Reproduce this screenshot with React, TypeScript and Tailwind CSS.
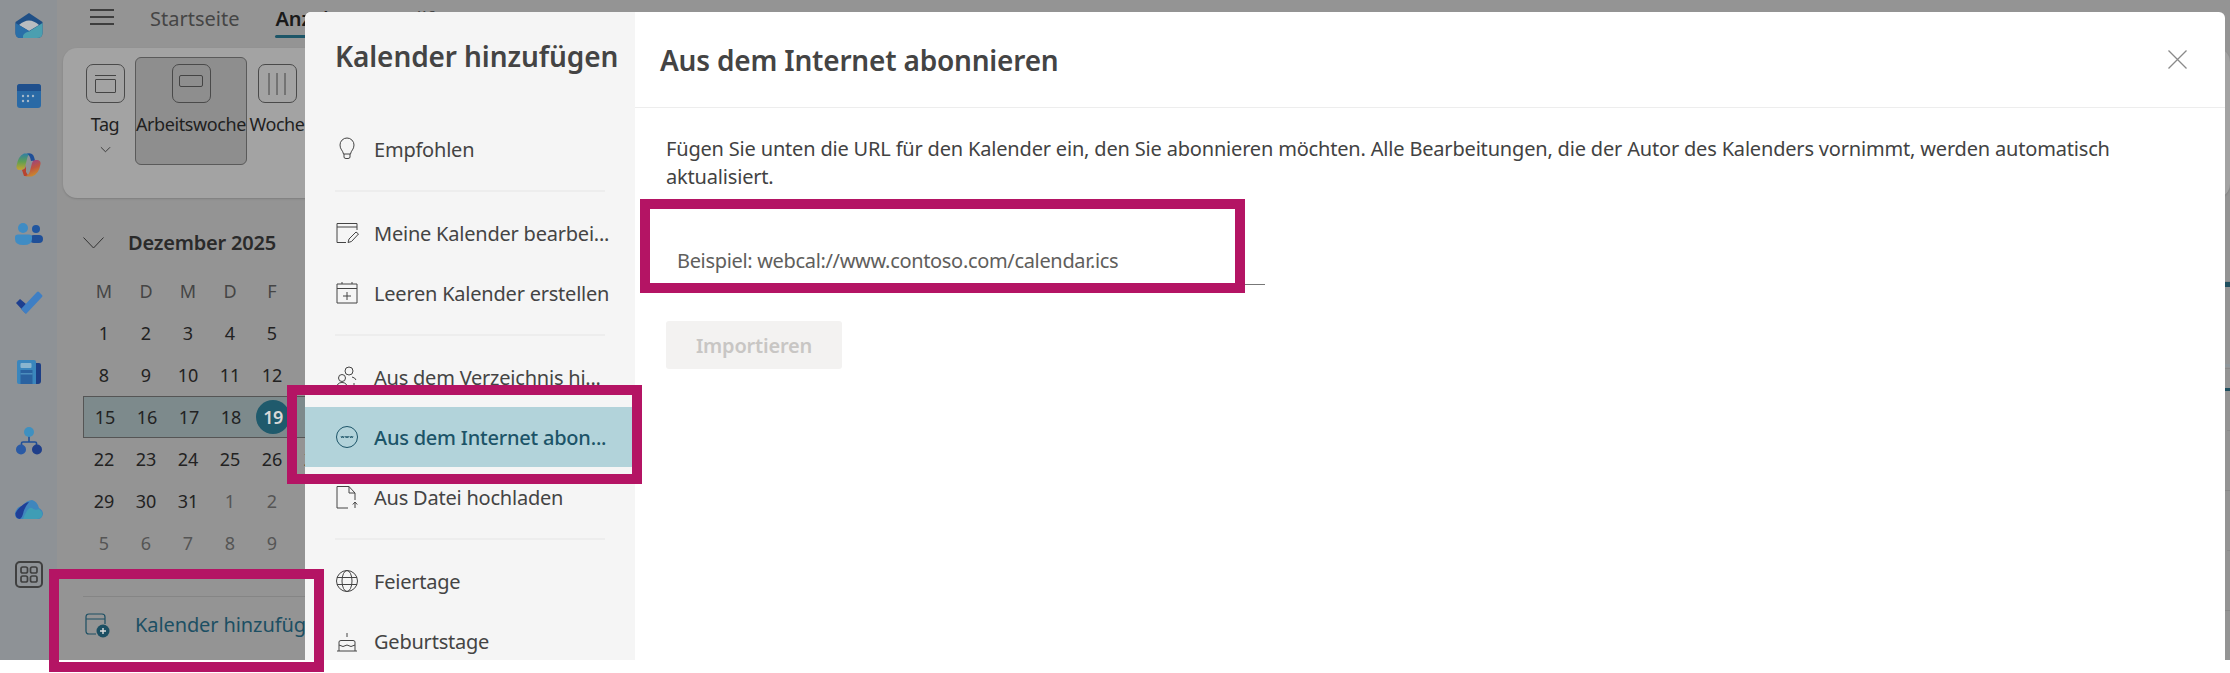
import type { ReactNode } from 'react';

const FONT = "font-['Noto_Sans',sans-serif]";

const weeks: { day: string; muted?: boolean; today?: boolean }[][] = [
  ['1', '2', '3', '4', '5', '6', '7'].map((day) => ({ day })),
  ['8', '9', '10', '11', '12', '13', '14'].map((day) => ({ day })),
  [{ day: '15' }, { day: '16' }, { day: '17' }, { day: '18' }, { day: '19', today: true }, { day: '20' }, { day: '21' }],
  ['22', '23', '24', '25', '26', '27', '28'].map((day) => ({ day })),
  [{ day: '29' }, { day: '30' }, { day: '31' }, { day: '1', muted: true }, { day: '2', muted: true }, { day: '3', muted: true }, { day: '4', muted: true }],
  ['5', '6', '7', '8', '9', '10', '11'].map((day) => ({ day, muted: true })),
];

function Stroke({ children, className }: { children: ReactNode; className?: string }) {
  return (
    <svg viewBox="0 0 24 24" fill="none" stroke="currentColor" strokeWidth="1" className={className ?? 'w-[24px] h-[24px] shrink-0'}>
      {children}
    </svg>
  );
}

function MailIcon() {
  return (
    <svg viewBox="0 0 28 25" className="w-[28px] h-[25px]">
      <path d="M14 0 L27.5 9 L27.5 20 Q27.5 25 22 25 L6 25 Q0.5 25 0.5 20 L0.5 9 Z" fill="#1f4f86" />
      <path d="M4 12 Q14 3 24 12 L14 18 Z" fill="#b9bcc0" />
      <path d="M0.5 10 L14 18 L9 25 L5 25 Q0.5 25 0.5 20 Z" fill="#2a6fa8" />
      <path d="M27.5 10 L27.5 20 Q27.5 25 22 25 L8 25 Q7 20 14 18.5 Z" fill="#4b9fb0" />
    </svg>
  );
}

function CalendarIcon() {
  return (
    <svg viewBox="0 0 24 24" className="w-[24px] h-[24px]">
      <rect width="24" height="24" rx="3" fill="#2a6aa6" />
      <path d="M0 7 V3 Q0 0 3 0 H21 Q24 0 24 3 V7 Z" fill="#1f4f8c" />
      <g fill="#a5b9ca">
        <circle cx="6" cy="12" r="1.2" /><circle cx="11" cy="12" r="1.2" /><circle cx="16" cy="12" r="1.2" />
        <circle cx="6" cy="17" r="1.2" /><circle cx="11" cy="17" r="1.2" />
      </g>
    </svg>
  );
}

function CopilotIcon() {
  return (
    <svg viewBox="0 0 25 24" className="w-[25px] h-[24px]">
      <defs>
        <linearGradient id="cpa" x1="0" y1="0" x2="0" y2="1">
          <stop offset="0" stopColor="#2f7fa5" /><stop offset="0.5" stopColor="#5f9f52" /><stop offset="1" stopColor="#c9a32f" />
        </linearGradient>
        <linearGradient id="cpb" x1="0" y1="0" x2="0.4" y2="1">
          <stop offset="0" stopColor="#8a3f9f" /><stop offset="0.6" stopColor="#c0553f" /><stop offset="1" stopColor="#c9872f" />
        </linearGradient>
      </defs>
      <path d="M8 0.5 H15 Q12 1 11 6 L9 14 Q8 17 4 17 Q0 17 0.5 13 Q2 3 8 0.5 Z" fill="url(#cpa)" />
      <path d="M11 0.5 H14 Q17 0.5 18 4 L19.5 9 Q17 7 15 8 Q14 2 11 0.5 Z" fill="#1f4f98" />
      <path d="M6 17 Q10 16 10 12 L10 19 Q11 22 14 23 H8 Q7 20 6 17 Z" fill="#b8442f" />
      <path d="M19 7 H22 Q25 8 24.5 11 Q23 21 16 23.5 H9 Q13 22 14 18 L16 10 Q17 7 19 7 Z" fill="url(#cpb)" />
    </svg>
  );
}

function PeopleIcon() {
  return (
    <svg viewBox="0 0 28 23" className="w-[28px] h-[23px]">
      <circle cx="21" cy="6" r="4" fill="#2056a0" />
      <rect x="15" y="12" width="13" height="8" rx="4" fill="#1f4f98" />
      <circle cx="8" cy="5" r="5" fill="#3f8cc4" />
      <path d="M0 14 Q0 11.5 3 11.5 H14 Q17 11.5 17 14 V16 Q17 22 8.5 22 Q0 22 0 16 Z" fill="#3f8cc4" />
    </svg>
  );
}

function TodoIcon() {
  return (
    <svg viewBox="0 0 28 23" className="w-[28px] h-[23px]">
      <path d="M1 12 L5 8 L11 13 L9 20 L11 23 Z" fill="#1e3f8f" />
      <path d="M11 23 L6 18 L22 1 Q23 0 24 1 L27 4 Q28 5 27 6 Z" fill="#3f7fc4" />
    </svg>
  );
}

function BookIcon() {
  return (
    <svg viewBox="0 0 24 24" className="w-[24px] h-[24px]">
      <path d="M17 3 H22 Q24 3 24 5 V21 Q24 24 21 24 H17 Z" fill="#1d3f86" />
      <path d="M2 0 H17 Q19 0 19 2 V24 H2 Q0 24 0 22 V2 Q0 0 2 0 Z" fill="#3a86bd" />
      <rect x="3.5" y="3" width="11" height="5" rx="1" fill="#89b5cf" />
      <rect x="3.5" y="10" width="12" height="14" fill="#2a62a0" />
      <rect x="3.5" y="13" width="12" height="1.5" fill="#4b8dbd" />
    </svg>
  );
}

function OrgIcon() {
  return (
    <svg viewBox="0 0 26 28" className="w-[26px] h-[28px]">
      <path d="M13 8 V15 M5.5 20 V16 Q5.5 15 7 15 H19 Q20.5 15 20.5 16 V20" stroke="#1f4f98" strokeWidth="1.6" fill="none" />
      <circle cx="13" cy="5" r="5" fill="#3f90c0" />
      <circle cx="5" cy="22.5" r="5" fill="#2a5aa5" />
      <circle cx="21" cy="22.5" r="5" fill="#1f3f8a" />
    </svg>
  );
}

function CloudIcon() {
  return (
    <svg viewBox="0 0 28 19" className="w-[28px] h-[19px]">
      <path d="M5 19 Q0 19 0 14 Q1 7 7 6 Q12 0 17 0 Q22 1 24 8 Q28 10 28 14 Q27 19 23 19 Z" fill="#3f86bd" />
      <path d="M5 19 Q0 18 0.5 13 Q3 8 9 4 Q12 2 14 2 Q9 8 8 14 Q7 18 5 19 Z" fill="#1f3f98" />
      <path d="M8 19 Q13 6 17 8 Q20 11 24 9 Q28 12 27 16 Q25 19 22 19 Z" fill="#3f9db5" />
    </svg>
  );
}

function AppsIcon() {
  return (
    <svg viewBox="0 0 28 27" fill="none" stroke="#404040" className="w-[28px] h-[27px]">
      <rect x="1" y="1" width="26" height="25" rx="4" strokeWidth="2" />
      <rect x="6" y="6" width="6.5" height="6" rx="1.8" strokeWidth="1.7" />
      <rect x="15.5" y="6" width="6.5" height="6" rx="1.8" strokeWidth="1.7" />
      <rect x="6" y="15" width="6.5" height="6" rx="1.8" strokeWidth="1.7" />
      <rect x="15.5" y="15" width="6.5" height="6" rx="1.8" strokeWidth="1.7" />
    </svg>
  );
}

function ViewButton({ label, selected, chevron, children, width }: { label: string; selected?: boolean; chevron?: boolean; children: ReactNode; width: string }) {
  return (
    <div className={`flex flex-col items-center shrink-0 h-[108px] pt-[6px] rounded-[6px] border ${width} ${selected ? 'bg-[#8e8e8e] border-[#5a5a5a]' : 'border-transparent'}`}>
      <div className="w-[39px] h-[39px] rounded-[7px] border-[1.5px] border-[#4a4a4a] flex flex-col items-center justify-center shrink-0">
        {children}
      </div>
      <div className="text-[18px] leading-[26px] mt-[8px] whitespace-nowrap text-[#1f1f1f] tracking-[-0.4px]">{label}</div>
      {chevron && (
        <svg viewBox="0 0 12 7" fill="none" stroke="#333" className="w-[11px] h-[7px] mt-[9px]"><path d="M1 1 L6 6 L11 1" /></svg>
      )}
    </div>
  );
}

function Sidebar() {
  return (
    <div className="w-[248px] shrink-0 flex flex-col h-full">
      <div className="h-[42px] ml-[26px] mt-[24px] flex items-center">
        <svg viewBox="0 0 21 12" fill="none" stroke="#333" className="w-[21px] h-[12px]"><path d="M0.5 0.5 L10.5 11 L20.5 0.5" /></svg>
        <span className="ml-[24px] text-[20px] font-semibold whitespace-nowrap text-[#2a2a2a] tracking-[-0.2px]">Dezember 2025</span>
      </div>
      <div className="ml-[26px] mt-[6px] flex h-[42px] items-center">
        {['M', 'D', 'M', 'D', 'F', 'S', 'S'].map((d, i) => (
          <div key={i} className="w-[42px] shrink-0 text-center text-[18px] text-[#454545]">{d}</div>
        ))}
      </div>
      {weeks.map((week, i) => (
        <div key={i} className={`ml-[26px] flex h-[42px] items-center w-[400px] ${i === 2 ? 'bg-[#7d8a8c] border border-[#555]' : ''}`}>
          {week.map((c, j) => (
            <div key={j} className="w-[42px] shrink-0 flex justify-center">
              <span className={c.today ? 'w-[34px] h-[34px] rounded-full bg-[#1f5a6c] text-[#d8d8d8] font-semibold flex items-center justify-center text-[18px] tracking-[-0.5px]' : `text-[18px] ${c.muted ? 'text-[#555]' : 'text-[#222]'}`}>
                {c.day}
              </span>
            </div>
          ))}
        </div>
      ))}
      <div className="ml-[26px] mt-[32px] w-[400px] border-t border-[#858585]" />
      <div className="ml-[28px] h-[56px] flex items-center text-[#1c4f63] w-[400px]">
        <svg viewBox="0 0 25 25" fill="none" stroke="currentColor" strokeWidth="1.2" className="w-[25px] h-[25px] shrink-0">
          <path d="M11 21 H4 Q1 21 1 18 V4 Q1 1 4 1 H17 Q20 1 20 4 V11 M1 6 H20" />
          <circle cx="18" cy="18" r="6.5" fill="currentColor" stroke="none" />
          <path d="M18 15 V21 M15 18 H21" stroke="#ddd" strokeWidth="1.4" />
        </svg>
        <span className="ml-[25px] text-[20px] whitespace-nowrap tracking-[-0.1px]">Kalender hinzufügen</span>
      </div>
    </div>
  );
}

function MenuRow({ icon, label, active }: { icon: ReactNode; label: string; active?: boolean }) {
  return (
    <div className={`h-[60px] pl-[30px] flex items-center shrink-0 ${active ? 'bg-[#b2d3da] text-[#1c5468] font-medium' : 'text-[#444]'}`}>
      <span className="w-[39px] shrink-0">{icon}</span>
      <span className="text-[20px] whitespace-nowrap tracking-[-0.22px] pt-[1px]">{label}</span>
    </div>
  );
}

function MenuDivider() {
  return <div className="h-[2px] my-[11px] mx-[30px] w-[270px] bg-[#ededed] shrink-0" />;
}

function CalendarEdge() {
  return (
    <div className="flex-1 flex flex-col h-full">
      <div className="h-[84px] border-b border-[#888]" />
      <div className="h-[5px] bg-[#1f4f5f]" />
      <div className="h-[77px] bg-[#949494]" />
      <div className="h-[3px] bg-[#8f979c]" />
      <div className="h-[2px] border-b border-[#888]" />
      <div className="h-[19px]" />
      <div className="h-[3px] bg-[#1f4f5f]" />
      <div className="h-[40px] border-b border-dashed border-[#8a8a8a]" />
      <div className="h-[60px] border-b border-[#888]" />
      <div className="h-[60px] border-b border-dashed border-[#8a8a8a]" />
      <div className="h-[60px] border-b border-[#888]" />
    </div>
  );
}

export default function App() {
  return (
    <div className={`relative w-[2230px] h-[673px] bg-white overflow-hidden ${FONT}`}>
      {/* dimmed app behind the dialog */}
      <div className="flex h-[660px] bg-[#949494] overflow-hidden">
        <div className="w-[57px] shrink-0 bg-[#8e9296] flex flex-col items-center">
          <div className="h-[13px] shrink-0" />
          <MailIcon />
          <div className="h-[46px] shrink-0" />
          <CalendarIcon />
          <div className="h-[45px] shrink-0" />
          <CopilotIcon />
          <div className="h-[46px] shrink-0" />
          <PeopleIcon />
          <div className="h-[45px] shrink-0" />
          <TodoIcon />
          <div className="h-[46px] shrink-0" />
          <BookIcon />
          <div className="h-[43px] shrink-0" />
          <OrgIcon />
          <div className="h-[45px] shrink-0" />
          <CloudIcon />
          <div className="h-[42px] shrink-0" />
          <AppsIcon />
        </div>
        <div className="flex-1 min-w-0 flex flex-col">
          <div className="h-[48px] shrink-0 flex items-start pl-[33px] pt-[6px]">
            <svg viewBox="0 0 24 16" stroke="#222" strokeWidth="1.3" className="w-[24px] h-[16px] mt-[3px] shrink-0"><path d="M0 1 H24 M0 8 H24 M0 15 H24" /></svg>
            <span className="ml-[36px] text-[20px] leading-[26px] text-[#454545] whitespace-nowrap">Startseite</span>
            <div className="ml-[36px] flex flex-col shrink-0">
              <span className="text-[20px] leading-[26px] font-semibold text-[#1a1a1a] whitespace-nowrap">Anzeigen</span>
              <div className="h-[3px] mt-[3px] bg-[#1d5668] rounded-full" />
            </div>
            <span className="ml-[36px] text-[20px] leading-[26px] text-[#454545] whitespace-nowrap">Hilfe</span>
          </div>
          <div className="h-[150px] shrink-0 ml-[6px] rounded-[14px] bg-[#a3a3a3] shadow-[0_1px_2px_rgba(0,0,0,0.15)] flex items-start pt-[9px] pl-[12px]">
            <ViewButton label="Tag" chevron width="w-[60px]">
              <div className="w-[21px] border-t border-[#444]" />
              <div className="w-[21px] h-[14px] mt-[3px] border border-[#444] rounded-[1px]" />
            </ViewButton>
            <ViewButton label="Arbeitswoche" selected width="w-[112px]">
              <div className="w-[24px] h-[12px] mb-[6px] border border-[#444] rounded-[2px]" />
            </ViewButton>
            <ViewButton label="Woche" width="w-[60px]">
              <svg viewBox="0 0 22 22" stroke="#444" className="w-[22px] h-[22px]"><path d="M3 0 V22 M11 0 V22 M19 0 V22" /></svg>
            </ViewButton>
          </div>
          <div className="flex flex-1 min-h-0">
            <Sidebar />
            <CalendarEdge />
          </div>
        </div>
      </div>

      {/* dialog */}
      <div className="absolute left-[305px] top-[12px] w-[1920px] h-[648px] flex rounded-t-[6px] overflow-hidden bg-white text-[#424242]">
        <div className="w-[330px] shrink-0 bg-[#f5f5f5] flex flex-col overflow-hidden">
          <div className="h-[107px] shrink-0 pl-[30px] pt-[20px] text-[28px] leading-[48px] font-semibold text-[#444] whitespace-nowrap tracking-[-0.1px]">Kalender hinzufügen</div>
          <MenuRow
            label="Empfohlen"
            icon={
              <Stroke>
                <path d="M8.5 17 C8 13.5 5 12.5 5 8 A7 7 0 0 1 19 8 C19 12.5 16 13.5 15.5 17 Z M9 17 V20 Q9 21.5 11 21.5 H13 Q15 21.5 15 20 V17" />
              </Stroke>
            }
          />
          <MenuDivider />
          <MenuRow
            label="Meine Kalender bearbei..."
            icon={
              <Stroke>
                <path d="M11 21.5 H2 V2.5 H22 V9 M2 6 H22 M13 21.5 L14 18 L21 11 L23.5 13 L16.5 20.5 Z" />
              </Stroke>
            }
          />
          <MenuRow
            label="Leeren Kalender erstellen"
            icon={
              <Stroke>
                <path d="M2 3 H22 V22 H2 Z M2 7.5 H22 M7 1 V3 M17 1 V3 M12 11 V19 M8 15 H16" />
              </Stroke>
            }
          />
          <MenuDivider />
          <MenuRow
            label="Aus dem Verzeichnis hi..."
            icon={
              <Stroke>
                <circle cx="14" cy="6" r="4" />
                <circle cx="7" cy="13" r="3.5" />
                <path d="M1.5 23 Q2 17.5 7 17.5 Q12 17.5 12.5 23 M17 12 Q20 12.5 21 15 M19 18 V24 M16 21 H22" />
              </Stroke>
            }
          />
          <MenuRow
            active
            label="Aus dem Internet abon..."
            icon={
              <Stroke>
                <circle cx="12" cy="12" r="10.5" />
                <path d="M6 11 L6.8 13 L7.6 11 L8.4 13 L9.2 11 M10.4 11 L11.2 13 L12 11 L12.8 13 L13.6 11 M14.8 11 L15.6 13 L16.4 11 L17.2 13 L18 11" strokeWidth="0.8" />
              </Stroke>
            }
          />
          <MenuRow
            label="Aus Datei hochladen"
            icon={
              <Stroke>
                <path d="M13 23 H2 V1.5 H14 L20 8 V15 M14 1.5 V8 H20 M20 23 V17.5 M17.8 19.5 L20 17 L22.2 19.5" />
              </Stroke>
            }
          />
          <MenuDivider />
          <MenuRow
            label="Feiertage"
            icon={
              <Stroke>
                <circle cx="12" cy="12" r="10.5" />
                <ellipse cx="12" cy="12" rx="5" ry="10.5" />
                <path d="M2 8.5 H22 M2 15.5 H22" />
              </Stroke>
            }
          />
          <MenuRow
            label="Geburtstage"
            icon={
              <Stroke>
                <path d="M12 4 V8 M4 22 V13 Q4 11.5 6 11.5 H18 Q20 11.5 20 13 V22 M2 22 H22 M4 16 Q8 19 12 16 Q16 19 20 16" />
              </Stroke>
            }
          />
        </div>
        <div className="flex-1 min-w-0 flex flex-col">
          <div className="h-[96px] shrink-0 border-b border-[#ededed] flex items-center justify-between pl-[25px] pr-[38px]">
            <span className="text-[28px] font-semibold text-[#444] whitespace-nowrap tracking-[-0.2px]">Aus dem Internet abonnieren</span>
            <svg viewBox="0 0 19 19" stroke="#8a8a8a" strokeWidth="1.3" className="w-[19px] h-[19px]"><path d="M0.5 0.5 L18.5 18.5 M18.5 0.5 L0.5 18.5" /></svg>
          </div>
          <div className="pl-[31px] pt-[27px] flex flex-col">
            <p className="w-[1460px] text-[20px] leading-[28px] text-[#424242] tracking-[-0.18px]">
              Fügen Sie unten die URL für den Kalender ein, den Sie abonnieren möchten. Alle Bearbeitungen, die der Autor des Kalenders vornimmt, werden automatisch aktualisiert.
            </p>
            <div className="w-[599px] h-[94px] flex items-end border-b border-[#777] pl-[11px] pb-[9px] text-[20px] leading-[28px] text-[#605e5c] tracking-[-0.33px]">
              Beispiel: webcal://www.contoso.com/calendar.ics
            </div>
            <div className="mt-[36px] w-[176px] h-[48px] pt-[1px] rounded-[3px] bg-[#f3f2f1] flex items-center justify-center text-[20px] font-semibold text-[#c8c6c4] tracking-[-0.2px]">
              Importieren
            </div>
          </div>
        </div>
      </div>

      {/* red annotation frames on top of the screenshot */}
      <div className="absolute left-[640px] top-[199px] w-[605px] h-[94px] border-[10px] border-[#b41464]" />
      <div className="absolute left-[287px] top-[385px] w-[355px] h-[99px] border-[10px] border-[#b41464]" />
      <div className="absolute left-[49px] top-[569px] w-[275px] h-[103px] border-[10px] border-[#b41464]" />
    </div>
  );
}
